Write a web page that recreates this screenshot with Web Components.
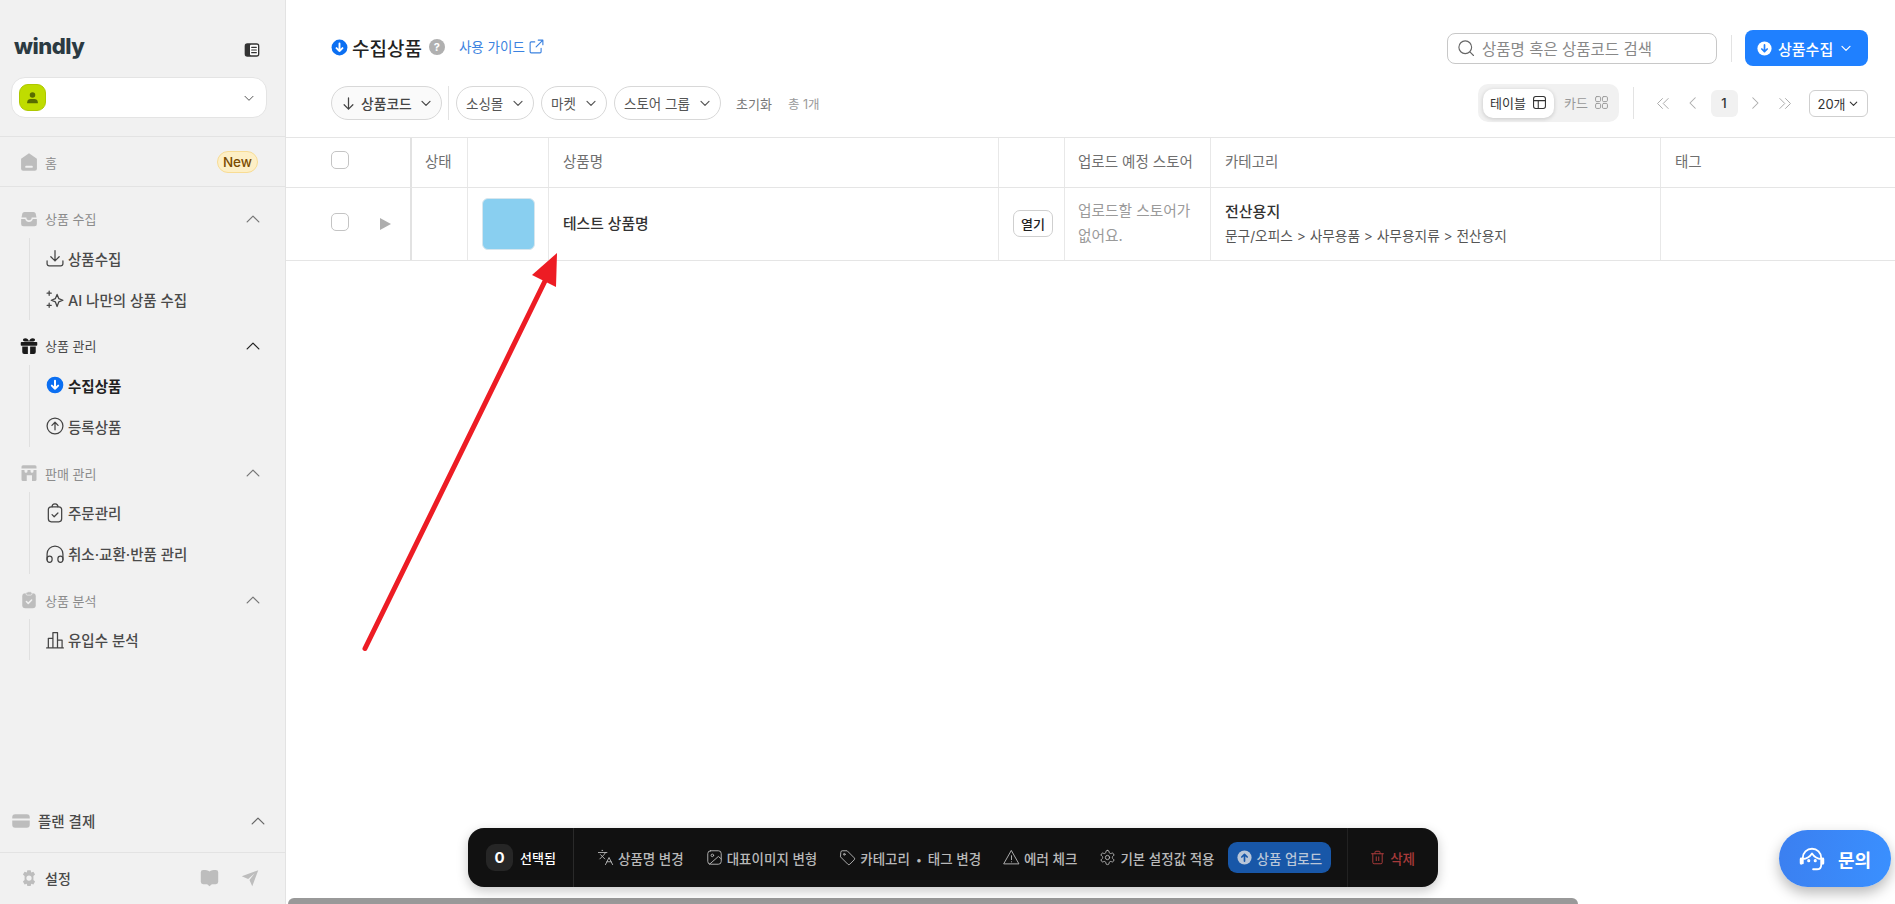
<!DOCTYPE html>
<html lang="ko">
<head>
<meta charset="utf-8">
<title>windly</title>
<style>
  html, body { margin: 0; height: 904px; overflow: hidden; background: #fff; }
  body { font-family: Inter, "Noto Sans CJK KR", sans-serif; color: #333; }
</style>
</head>
<body>
<windly-app></windly-app>
<script>
const ICONS = {
  panel: `<rect x="1" y="2" width="22" height="20" rx="4" fill="#333" stroke="none"/><rect x="9" y="4" width="12" height="16" rx="1.5" fill="#fff" stroke="none"/><path d="M11.5 8h7M11.5 12h7M11.5 16h7" stroke="#333" stroke-width="1.8"/>`,
  person: `<circle cx="12" cy="8" r="4.4" fill="currentColor" stroke="none"/><path d="M3.5 21v-1.5c0-3 2.6-5 5.5-5h6c2.9 0 5.5 2 5.5 5V21z" fill="currentColor" stroke="none"/>`,
  down: `<path d="M6 9.5l6 6 6-6"/>`,
  up: `<path d="M5 15.5l7-7 7 7"/>`,
  left: `<path d="M15 5l-7 7 7 7"/>`,
  right: `<path d="M9 5l7 7-7 7"/>`,
  dleft: `<path d="M12 5l-7 7 7 7M20 5l-7 7 7 7"/>`,
  dright: `<path d="M4 5l7 7-7 7M12 5l7 7-7 7"/>`,
  home: `<path d="M12 1.5L21.5 8v12a2.5 2.5 0 0 1-2.5 2.5H5A2.5 2.5 0 0 1 2.5 20V8z" fill="currentColor" stroke="none"/><rect x="7.5" y="16.5" width="9" height="2.4" rx="1" fill="#f1f1f1" stroke="none"/>`,
  inbox: `<path d="M6 2.5h12a3 3 0 0 1 2.9 2.3L22 10h-6.5a3.5 3.5 0 0 1-7 0H2l1.1-5.2A3 3 0 0 1 6 2.5z" fill="currentColor" stroke="none"/><path d="M1.5 12h5.4a5.3 5.3 0 0 0 10.2 0h5.4v6.5a3 3 0 0 1-3 3h-15a3 3 0 0 1-3-3z" fill="currentColor" stroke="none"/>`,
  download: `<path d="M12 3v12.5M7 10.5l5 5 5-5M2.5 15.5V19a2.5 2.5 0 0 0 2.5 2.5h14a2.5 2.5 0 0 0 2.5-2.5v-3.5"/>`,
  sparkles: `<path d="M14.5 6.5l2 5 5 2-5 2-2 5.5-2-5.5-5-2 5-2zM5 2.5v5M2.5 5h5M5 17v5M2.5 19.5h5"/>`,
  gift: `<path d="M7 1.5c2.5 0 4 1.5 5 4 1-2.5 2.5-4 5-4 2 0 3 1 3 2.3 0 1.4-1 2.2-2.5 2.2h-11C5 6 4 5.2 4 3.8 4 2.5 5 1.5 7 1.5z" fill="currentColor" stroke="none"/><rect x="1" y="6.5" width="22" height="5" rx="1" fill="currentColor" stroke="none"/><path d="M3 12.5h7.5v10h-5A2.5 2.5 0 0 1 3 20zM13.5 12.5H21V20a2.5 2.5 0 0 1-2.5 2.5h-5z" fill="currentColor" stroke="none"/>`,
  circleDown: `<circle cx="12" cy="12" r="10" fill="currentColor" stroke="none"/><path d="M12 7v9.5M8.2 12.7l3.8 3.8 3.8-3.8" style="stroke:var(--arrow,#fff)" stroke-width="2.4"/>`,
  circleUpSolid: `<circle cx="12" cy="12" r="10" fill="currentColor" stroke="none"/><path d="M12 17V7.5M8.2 11.3L12 7.5l3.8 3.8" stroke="#1857a8" stroke-width="2.4"/>`,
  circleUp: `<circle cx="12" cy="12" r="9.5"/><path d="M12 16.5v-9M8.3 11.2L12 7.5l3.7 3.7"/>`,
  store: `<path d="M4 1.5h16a2 2 0 0 1 2 2V6H2V3.5a2 2 0 0 1 2-2z" fill="currentColor" stroke="none"/><path d="M2 8h4v1.5a2 2 0 0 0 4 0V8h4v1.5a2 2 0 0 0 4 0V8h4v12.5a2 2 0 0 1-2 2h-4V15H9v7.5H4a2 2 0 0 1-2-2z" fill="currentColor" stroke="none"/>`,
  clipboard: `<rect x="4" y="4.5" width="16" height="18" rx="3.5"/><path d="M8.5 4.5a3.5 3.5 0 0 1 7 0M8.5 14l2.5 2.5 4.5-4.5"/>`,
  clipboardSolid: `<rect x="3" y="3" width="18" height="20" rx="4" fill="currentColor" stroke="none"/><rect x="8" y="1" width="8" height="4.5" rx="2" fill="currentColor" stroke="#f1f1f1" stroke-width="1"/><path d="M8.5 14l2.5 2.5 4.5-4.5" stroke="#f1f1f1"/>`,
  headphones: `<path d="M2.5 19v-7a9.5 9.5 0 0 1 19 0v7"/><rect x="2.5" y="14.5" width="6" height="7.5" rx="3"/><rect x="15.5" y="14.5" width="6" height="7.5" rx="3"/>`,
  chart: `<path d="M2 21.5h20M4 21.5V10h5.5v11.5M9.5 21.5V3H15v18.5M15 21.5V12h5.5v9.5"/>`,
  card: `<path d="M5 4h14a3.5 3.5 0 0 1 3.5 3.5V9h-21V7.5A3.5 3.5 0 0 1 5 4zM1.5 11.5h21v5a3.5 3.5 0 0 1-3.5 3.5H5a3.5 3.5 0 0 1-3.5-3.5z" fill="currentColor" stroke="none"/>`,
  gear: `<path fill-rule="evenodd" d="M9.8 1.5h4.4l.8 3 2.9-1 2.2 3.7-2.2 2.2v5.2l2.2 2.2-2.2 3.7-2.9-1-.8 3H9.8l-.8-3-2.9 1-2.2-3.7 2.2-2.2V9.4L3.9 7.200l2.2-3.700 2.9 1zM12 8.500a3.500 3.500 0 1 0 0 7 3.500 3.500 0 0 0 0-7z" fill="currentColor" stroke="none"/>`,
  book: `<path d="M4 2.5c3.5 0 6 .5 8 2 2-1.5 4.5-2 8-2a3 3 0 0 1 3 3v12a3 3 0 0 1-3 3h-5l-3 2.5L9 20.500H4a3 3 0 0 1-3-3v-12a3 3 0 0 1 3-3z" fill="currentColor" stroke="none"/>`,
  send: `<path d="M23 1.5L1 9.500l8.500 3.800L18 6l-6.700 8.500L15 23z" fill="currentColor" stroke="none"/>`,
  external: `<path d="M14.500 3H21v6.500M21 3l-9.500 9.500M18.500 14.500v5a1.500 1.500 0 0 1-1.500 1.500H4.500A1.500 1.500 0 0 1 3 19.500V7a1.500 1.500 0 0 1 1.500-1.500h5"/>`,
  arrowDown: `<path d="M12 3v18M5 14l7 7 7-7"/>`,
  search: `<circle cx="11" cy="11" r="8.500"/><path d="M17.500 17.500L22 22"/>`,
  table: `<rect x="2.500" y="2.500" width="19" height="19" rx="3.500"/><path d="M2.500 9h19M10 9v12.500"/>`,
  grid: `<rect x="2.500" y="2.500" width="8" height="8" rx="2"/><rect x="13.500" y="2.500" width="8" height="8" rx="2"/><rect x="2.500" y="13.500" width="8" height="8" rx="2"/><rect x="13.500" y="13.500" width="8" height="8" rx="2"/>`,
  translate: `<path d="M5 8l6 6M4 14l6-6 2-3M2 5h12M7 2h1M22 22l-5-10-5 10M14 18h6"/>`,
  image: `<rect x="2.500" y="2.500" width="19" height="19" rx="4"/><circle cx="9" cy="9" r="1.800"/><path d="M21.500 14l-4-3.500L5 21.500"/>`,
  tag: `<path d="M2.500 4.500a2 2 0 0 1 2-2h7l10 10a2 2 0 0 1 0 2.800l-6.200 6.200a2 2 0 0 1-2.800 0l-10-10z"/><circle cx="7.500" cy="7.500" r="1.200"/>`,
  warning: `<path d="M12 2.500L22.500 21h-21zM12 9.500V15M12 18v.2"/>`,
  hexgear: `<path d="M12.220 2h-.44a2 2 0 0 0-2 2v.18a2 2 0 0 1-1 1.730l-.43.25a2 2 0 0 1-2 0l-.15-.08a2 2 0 0 0-2.730.730l-.22.38a2 2 0 0 0 .73 2.730l.15.1a2 2 0 0 1 1 1.720v.51a2 2 0 0 1-1 1.740l-.15.09a2 2 0 0 0-.73 2.730l.22.38a2 2 0 0 0 2.730.730l.15-.08a2 2 0 0 1 2 0l.43.25a2 2 0 0 1 1 1.730V20a2 2 0 0 0 2 2h.44a2 2 0 0 0 2-2v-.18a2 2 0 0 1 1-1.730l.43-.25a2 2 0 0 1 2 0l.15.08a2 2 0 0 0 2.730-.730l.22-.39a2 2 0 0 0-.73-2.730l-.15-.08a2 2 0 0 1-1-1.740v-.5a2 2 0 0 1 1-1.740l.15-.09a2 2 0 0 0 .73-2.730l-.22-.38a2 2 0 0 0-2.730-.730l-.15.08a2 2 0 0 1-2 0l-.43-.25a2 2 0 0 1-1-1.730V4a2 2 0 0 0-2-2z"/><circle cx="12" cy="12" r="3"/>`,
  trash: `<path d="M2.500 6h19M8 6V3.500A1.500 1.500 0 0 1 9.500 2h5A1.500 1.500 0 0 1 16 3.500V6M4.500 6v14a2 2 0 0 0 2 2h11a2 2 0 0 0 2-2V6M10 11v6M14 11v6"/>`,
  headset: `<path d="M3.500 16V11a8.500 8.500 0 0 1 17 0v6.500c0 2.500-1.500 4-4 4H13M3.500 12c4 0 6.500-2 8.500-5 2 3 4.500 5 8.500 5"/><path d="M2 12v4M22 12v4" stroke-width="2.600"/><circle cx="9" cy="13.500" r=".6" fill="currentColor"/><circle cx="15" cy="13.500" r=".6" fill="currentColor"/>`
};

class UiIcon extends HTMLElement {
  connectedCallback() {
    const size = this.getAttribute('size') || 16;
    const sw = this.getAttribute('sw') || 2;
    this.attachShadow({ mode: 'open' }).innerHTML = `
      <style>
        :host { display: inline-flex; flex: none; width: ${size}px; height: ${size}px; }
        svg { width: 100%; height: 100%; display: block; }
      </style>
      <svg viewBox="0 0 24 24" fill="none" stroke="currentColor" stroke-width="${sw}" stroke-linecap="round" stroke-linejoin="round">${ICONS[this.getAttribute('name')] || ''}</svg>`;
  }
}

class NavItem extends HTMLElement {
  connectedCallback() {
    const active = this.hasAttribute('active');
    this.attachShadow({ mode: 'open' }).innerHTML = `
      <style>
        :host { display: flex; align-items: center; gap: 3px; height: 41px; padding-left: 15px;
          font-size: 14.5px; font-weight: ${active ? 700 : 500}; color: ${active ? '#222' : '#4a4a4a'}; }
        ui-icon { color: ${active ? '#0b6ff2' : '#444'}; }
      </style>
      <ui-icon name="${this.getAttribute('icon')}" size="20" sw="1.5"></ui-icon>
      <slot></slot>`;
  }
}

class NavSection extends HTMLElement {
  connectedCallback() {
    const active = this.hasAttribute('active');
    this.attachShadow({ mode: 'open' }).innerHTML = `
      <style>
        :host { display: block; margin-bottom: 9.3px; }
        .head { display: flex; align-items: center; height: 34px; padding: 0 22px 0 20px; margin-bottom: 2px;
          font-size: 13px; font-weight: 400; color: ${active ? '#4a4a4a' : '#8c8c8c'}; }
        .head b { font-weight: inherit; margin-left: 7px; flex: 1; }
        .icon { color: ${active ? '#1b1b1b' : '#bdbdbd'}; }
        .chev { color: ${active ? '#222' : '#777'}; }
        .items { margin-left: 29px; border-left: 1px solid #e0e0e0; }
      </style>
      <div class="head">
        <ui-icon class="icon" name="${this.getAttribute('icon')}" size="18"></ui-icon>
        <b>${this.getAttribute('label')}</b>
        <ui-icon class="chev" name="up" size="20" sw="1.5"></ui-icon>
      </div>
      <div class="items"><slot></slot></div>`;
  }
}

class AppSidebar extends HTMLElement {
  connectedCallback() {
    this.attachShadow({ mode: 'open' }).innerHTML = `
      <style>
        :host { display: flex; flex-direction: column; flex: none; width: 286px; height: 904px; box-sizing: border-box;
          background: #f1f1f1; border-right: 1px solid #e3e3e3; }
        .brand { display: flex; align-items: center; justify-content: space-between; height: 77px; padding: 19px 25px 0 14px; box-sizing: border-box; flex: none; }
        .logo { font-family: Inter, sans-serif; font-weight: 800; font-size: 22px; letter-spacing: -0.5px; color: #2b3a42; margin-top: -5px; }
        .brand ui-icon { margin-top: 4px; }
        .account { display: flex; align-items: center; justify-content: space-between; height: 41px; margin: 0 18px 18px 11px; flex: none;
          padding: 0 9px 0 7px; background: #fff; border: 1px solid #e4e4e4; border-radius: 14px; box-sizing: border-box; }
        .avatar { display: flex; align-items: center; justify-content: center; width: 27px; height: 27px; border-radius: 9px;
          background: #bfdc00; border: 1px solid #aec800; box-sizing: border-box; color: #586c00; }
        .home { display: flex; align-items: center; height: 51px; box-sizing: border-box; padding: 0 27px 0 19px; border-top: 1px solid #e3e3e3; border-bottom: 1px solid #e3e3e3;
          font-size: 13px; font-weight: 400; color: #8c8c8c; margin-bottom: 14.5px; flex: none; }
        .home span { margin-left: 6px; flex: 1; padding-top: 2px; }
        .new { font-size: 13.5px; font-weight: 500; color: #7a4b00; background: #fdefc6; border: 1px solid #f8dc94; border-radius: 11px; padding: 0 5px; line-height: 20px; }
        .spacer { flex: 1; }
        .plan { display: flex; align-items: center; height: 60px; padding: 0 17px 3px 11px; box-sizing: border-box; font-size: 14.5px; font-weight: 500; color: #4a4a4a; flex: none; }
        .plan span { margin-left: 7px; flex: 1; }
        .plan ui-icon:first-child, .foot ui-icon { color: #bdbdbd; }
        .plan ui-icon:last-child { color: #666; }
        .foot { display: flex; align-items: center; height: 52px; padding: 0 26px 2px 20px; border-top: 1px solid #e3e3e3; box-sizing: border-box; font-size: 14px; font-weight: 500; color: #4a4a4a; flex: none; }
        .foot span { margin-left: 7px; flex: 1; }
        .foot .send { margin-left: 22px; }
      </style>
      <div class="brand"><span class="logo">windly</span><ui-icon name="panel" size="16"></ui-icon></div>
      <div class="account">
        <span class="avatar"><ui-icon name="person" size="15"></ui-icon></span>
        <ui-icon name="down" size="16" sw="1.5" style="color:#555"></ui-icon>
      </div>
      <div class="home">
        <ui-icon name="home" size="20" style="color:#bdbdbd"></ui-icon><span>홈</span>
        <b class="new">New</b>
      </div>
      <nav-section icon="inbox" label="상품 수집">
        <nav-item icon="download">상품수집</nav-item>
        <nav-item icon="sparkles">AI 나만의 상품 수집</nav-item>
      </nav-section>
      <nav-section icon="gift" label="상품 관리" active>
        <nav-item icon="circleDown" active>수집상품</nav-item>
        <nav-item icon="circleUp">등록상품</nav-item>
      </nav-section>
      <nav-section icon="store" label="판매 관리">
        <nav-item icon="clipboard">주문관리</nav-item>
        <nav-item icon="headphones">취소·교환·반품 관리</nav-item>
      </nav-section>
      <nav-section icon="clipboardSolid" label="상품 분석">
        <nav-item icon="chart">유입수 분석</nav-item>
      </nav-section>
      <div class="spacer"></div>
      <div class="plan"><ui-icon name="card" size="20"></ui-icon><span>플랜 결제</span><ui-icon name="up" size="20" sw="1.5"></ui-icon></div>
      <div class="foot">
        <ui-icon name="gear" size="18"></ui-icon><span>설정</span>
        <ui-icon name="book" size="19"></ui-icon><ui-icon class="send" name="send" size="18"></ui-icon>
      </div>`;
  }
}

class FilterPill extends HTMLElement {
  connectedCallback() {
    this.attachShadow({ mode: 'open' }).innerHTML = `
      <style>
        :host { display: inline-flex; align-items: center; height: 34px; padding: 0 7px 0 9px; box-sizing: border-box; white-space: nowrap;
          border: 1px solid #d8d8d8; border-radius: 17px; font-size: 13.5px; font-weight: 400; color: #555; background: #fff; }
        :host([strong]) { background: #fafafa; color: #444; font-weight: 500; font-size: 13.8px; }
        .chev { margin-left: auto; }
      </style>
      <slot></slot>
      <ui-icon class="chev" name="down" size="16" sw="1.8"></ui-icon>`;
  }
}

class PageHeader extends HTMLElement {
  connectedCallback() {
    this.attachShadow({ mode: 'open' }).innerHTML = `
      <style>
        :host { display: block; flex: none; height: 137px; padding: 30px 27px 0 44px; box-sizing: border-box; }
        .row { display: flex; align-items: center; justify-content: space-between; }
        .top { height: 36px; margin-bottom: 18px; }
        .bottom { height: 38px; }
        .group { display: flex; align-items: center; }
        .title { margin-top: -2px; }
        h1 { margin: 0 7px 0 3px; font-size: 19px; font-weight: 500; color: #222; }
        .help { display: flex; align-items: center; justify-content: center; width: 16px; height: 16px; border-radius: 50%;
          background: #b0b0b0; color: #fff; font-size: 11px; font-weight: 700; }
        .guide { display: flex; align-items: center; gap: 3px; margin-left: 14px; margin-top: -2px; font-size: 13.5px; font-weight: 400; color: #3b82e0; }
        .search { display: flex; align-items: center; gap: 7px; width: 270px; height: 31px; padding: 0 9px; box-sizing: border-box; white-space: nowrap;
          border: 1px solid #c8c8c8; border-radius: 8px; font-size: 15.5px; color: #888; }
        .vr { width: 1px; background: #e3e3e3; }
        .collect { display: flex; align-items: center; gap: 5px; width: 123px; height: 36px; padding-left: 11px; box-sizing: border-box; border-radius: 8px;
          background: #1f80ff; color: #fff; font-size: 15px; font-weight: 500; --arrow: #1f80ff; }
        .reset { margin-left: 15px; font-size: 13px; font-weight: 400; color: #777; }
        .total { margin-left: 16px; font-size: 12.5px; color: #9a9a9a; }
        .toggle { display: flex; align-items: center; width: 141px; height: 38px; padding: 0 5px; box-sizing: border-box; background: #f1f1f1; border-radius: 10px; }
        .tab { display: flex; align-items: center; gap: 6px; height: 29px; font-size: 13px; font-weight: 400; color: #999; padding: 0 0 1px 10px; box-sizing: border-box; }
        .tab.on { width: 71px; padding-left: 7px; background: #fff; border-radius: 10px; color: #333; box-shadow: 0 1px 4px rgba(0,0,0,.18); }
        .pages { display: flex; align-items: center; }
        .pg { display: flex; align-items: center; justify-content: center; width: 30.75px; height: 27px; color: #aaa; }
        .pg.on { width: 27px; margin: 0 2px; background: #f1f1f1; border-radius: 6px; color: #333; font-size: 13px; font-weight: 500; }
        .size { display: flex; align-items: center; justify-content: center; gap: 1px; width: 59px; height: 27px; margin-left: 8px; box-sizing: border-box;
          border: 1px solid #cfcfcf; border-radius: 6px; font-size: 13px; font-weight: 400; color: #333; }
      </style>
      <div class="row top">
        <div class="group title">
          <ui-icon name="circleDown" size="19" style="color:#0b6ff2"></ui-icon>
          <h1>수집상품</h1>
          <span class="help">?</span>
          <span class="guide">사용 가이드<ui-icon name="external" size="17" sw="1.6"></ui-icon></span>
        </div>
        <div class="group">
          <div class="search"><ui-icon name="search" size="18" sw="1.5" style="color:#666"></ui-icon>상품명 혹은 상품코드 검색</div>
          <div class="vr" style="height:27px;margin:0 13px 0 14px"></div>
          <div class="collect"><ui-icon name="circleDown" size="17" style="color:#fff"></ui-icon>상품수집<ui-icon name="down" size="16" sw="1.8"></ui-icon></div>
        </div>
      </div>
      <div class="row bottom">
        <div class="group" style="padding-left:1px">
          <filter-pill strong style="width:111px"><ui-icon name="arrowDown" size="15" sw="2" style="margin-right:5px"></ui-icon>상품코드</filter-pill>
          <div class="vr" style="height:34px;margin:0 7px 0 6px"></div>
          <filter-pill style="width:78px;margin-right:7px">소싱몰</filter-pill>
          <filter-pill style="width:66px;margin-right:7px">마켓</filter-pill>
          <filter-pill style="width:107px">스토어 그룹</filter-pill>
          <span class="reset">초기화</span>
          <span class="total">총 1개</span>
        </div>
        <div class="group">
          <div class="toggle">
            <div class="tab on">테이블<ui-icon name="table" size="15" sw="1.7"></ui-icon></div>
            <div class="tab">카드<ui-icon name="grid" size="15" sw="1.5"></ui-icon></div>
          </div>
          <div class="vr" style="height:32px;margin:0 13px 0 14px"></div>
          <div class="pages">
            <span class="pg"><ui-icon name="dleft" size="17" sw="1.4"></ui-icon></span>
            <span class="pg"><ui-icon name="left" size="18" sw="1.4"></ui-icon></span>
            <span class="pg on">1</span>
            <span class="pg"><ui-icon name="right" size="18" sw="1.4"></ui-icon></span>
            <span class="pg"><ui-icon name="dright" size="17" sw="1.4"></ui-icon></span>
          </div>
          <div class="size">20개<ui-icon name="down" size="13" sw="2"></ui-icon></div>
        </div>
      </div>`;
  }
}

class TableBox extends HTMLElement {
  connectedCallback() {
    this.attachShadow({ mode: 'open' }).innerHTML = `
      <style>
        :host { display: block; flex: none; }
        .row { display: grid; grid-template-columns: 126px 56px 81px 450px 66px 146px 450px 1fr; border-bottom: 1px solid #e5e5e5; box-sizing: border-box; }
        .row.head { height: 51px; border-top: 1px solid #e5e5e5; font-size: 14.5px; color: #6f6f6f; }
        .row.head .cell { padding-bottom: 4px; }
        .row.body { height: 73px; }
        .cell { display: flex; align-items: center; padding-left: 13px; border-right: 1px solid #e8e8e8; box-sizing: border-box; white-space: nowrap; }
        .cell:last-child { border-right: 0; padding-left: 14px; }
        .first { padding-left: 45px; border-right-width: 2px; border-right-color: #e2e2e2; }
        .box { width: 18px; height: 18px; border: 1px solid #c4c4c4; border-radius: 5px; box-sizing: border-box; background: #fff; flex: none; }
        .body .box { margin-top: -4px; }
        .play { width: 0; height: 0; margin-left: 31px; border-left: 11px solid #aeaeae; border-top: 6.5px solid transparent; border-bottom: 6.5px solid transparent; }
        .thumb { width: 53px; height: 52px; border-radius: 6px; background: #89cff0; border: 1px solid #d6e6ee; box-sizing: border-box; }
        .name { font-size: 14.8px; font-weight: 500; color: #333; margin-top: -4px; }
        .open { display: flex; align-items: center; justify-content: center; width: 40px; height: 27px; border: 1px solid #cfcfcf; border-radius: 7px; box-sizing: border-box; font-size: 13px; font-weight: 500; color: #222; margin-top: -2px; }
        .store { font-size: 14.7px; line-height: 25px; color: #9a9a9a; margin-top: -1px; }
        .cat { margin-top: -1px; }
        .cat b { display: block; font-size: 15px; font-weight: 500; color: #333; line-height: 25px; }
        .cat span { display: block; font-size: 13.7px; color: #555; line-height: 25px; }
      </style>
      <div class="row head">
        <div class="cell first"><span class="box" style="margin-top:-1px"></span></div>
        <div class="cell">상태</div>
        <div class="cell"></div>
        <div class="cell" style="padding-left:14px">상품명</div>
        <div class="cell"></div>
        <div class="cell">업로드 예정 스토어</div>
        <div class="cell" style="padding-left:14px">카테고리</div>
        <div class="cell">태그</div>
      </div>
      <div class="row body">
        <div class="cell first"><span class="box"></span><span class="play"></span></div>
        <div class="cell"></div>
        <div class="cell" style="padding-left:14px"><span class="thumb"></span></div>
        <div class="cell" style="padding-left:14px"><span class="name">테스트 상품명</span></div>
        <div class="cell" style="padding-left:14px"><span class="open">열기</span></div>
        <div class="cell"><span class="store">업로드할 스토어가<br>없어요.</span></div>
        <div class="cell" style="padding-left:14px"><div class="cat"><b>전산용지</b><span>문구/오피스 &gt; 사무용품 &gt; 사무용지류 &gt; 전산용지</span></div></div>
        <div class="cell"></div>
      </div>`;
  }
}

class ActionBar extends HTMLElement {
  connectedCallback() {
    const act = (icon, label) => `<span class="act"><ui-icon name="${icon}" size="17" sw="1.3"></ui-icon><span>${label}</span></span>`;
    this.attachShadow({ mode: 'open' }).innerHTML = `
      <style>
        :host { position: absolute; left: 468px; top: 828px; width: 970px; height: 59px; display: flex; align-items: center; box-sizing: border-box;
          background: #111; border-radius: 16px; box-shadow: 0 4px 12px rgba(0,0,0,.22); color: #b9b9b9; font-size: 13.5px; font-weight: 500; white-space: nowrap; }
        .count { display: flex; align-items: center; gap: 7px; width: 106px; height: 100%; padding-left: 18px; box-sizing: border-box; border-right: 1px solid #2a2a2a; color: #fff; font-size: 13px; }
        .count i { display: flex; align-items: center; justify-content: center; width: 27px; height: 27px; background: #262626; border-radius: 9px; font-style: normal; font-weight: 700; font-size: 15px; }
        .acts { display: flex; align-items: center; gap: 22px; padding-left: 23px; flex: 1; }
        .act { display: flex; align-items: center; gap: 4px; }
        .dot { margin: 0 6px; font-size: 11px; }
        .upload { display: flex; align-items: center; gap: 4px; height: 31px; margin-left: -9px; padding: 0 9px 0 8px; background: #1857a8; border-radius: 9px; color: #b9c6d8; }
        .upload ui-icon { color: #b9c6d8; }
        .del { display: flex; align-items: center; gap: 5px; height: 100%; padding: 0 23px 0 22px; border-left: 1px solid #222; color: #a83a3a; }
      </style>
      <div class="count"><i>0</i>선택됨</div>
      <div class="acts">
        ${act('translate', '상품명 변경')}
        ${act('image', '대표이미지 변형')}
        ${act('tag', '카테고리<span class="dot">•</span>태그 변경')}
        ${act('warning', '에러 체크')}
        ${act('hexgear', '기본 설정값 적용')}
        <span class="upload"><ui-icon name="circleUpSolid" size="17"></ui-icon>상품 업로드</span>
      </div>
      <div class="del"><ui-icon name="trash" size="15" sw="1.6"></ui-icon>삭제</div>`;
  }
}

class ChatButton extends HTMLElement {
  connectedCallback() {
    this.attachShadow({ mode: 'open' }).innerHTML = `
      <style>
        :host { position: absolute; left: 1779px; top: 830px; width: 112px; height: 57px; display: flex; align-items: center; justify-content: center; gap: 13px;
          border-radius: 29px; background: linear-gradient(100deg, #3b7ff0, #3a90ff); box-shadow: 0 6px 14px rgba(0,0,0,.28); color: #fff; font-size: 18px; font-weight: 700; }
      </style>
      <ui-icon name="headset" size="26" sw="1.7"></ui-icon>문의`;
  }
}

class WindlyApp extends HTMLElement {
  connectedCallback() {
    this.attachShadow({ mode: 'open' }).innerHTML = `
      <style>
        :host { display: flex; position: relative; width: 1895px; height: 904px; overflow: hidden; }
        main { flex: 1; display: flex; flex-direction: column; min-width: 0; }
        .gap { flex: 1; }
        .thumbbar { width: 1290px; height: 6px; margin-left: 2px; background: #999; border-radius: 6px 6px 0 0; flex: none; }
        .arrow { position: absolute; left: 0; top: 0; pointer-events: none; }
      </style>
      <app-sidebar></app-sidebar>
      <main>
        <page-header></page-header>
        <table-box></table-box>
        <div class="gap"></div>
        <div class="thumbbar"></div>
      </main>
      <svg class="arrow" width="1895" height="904" viewBox="0 0 1895 904">
        <path d="M365 648.5L545 281" stroke="#ed1c24" stroke-width="5" stroke-linecap="round" fill="none"/>
        <path d="M557 253L532 275L556 287z" fill="#ed1c24"/>
      </svg>
      <action-bar></action-bar>
      <chat-button></chat-button>`;
  }
}

customElements.define('ui-icon', UiIcon);
customElements.define('nav-item', NavItem);
customElements.define('nav-section', NavSection);
customElements.define('app-sidebar', AppSidebar);
customElements.define('filter-pill', FilterPill);
customElements.define('page-header', PageHeader);
customElements.define('table-box', TableBox);
customElements.define('action-bar', ActionBar);
customElements.define('chat-button', ChatButton);
customElements.define('windly-app', WindlyApp);
</script>
</body>
</html>
